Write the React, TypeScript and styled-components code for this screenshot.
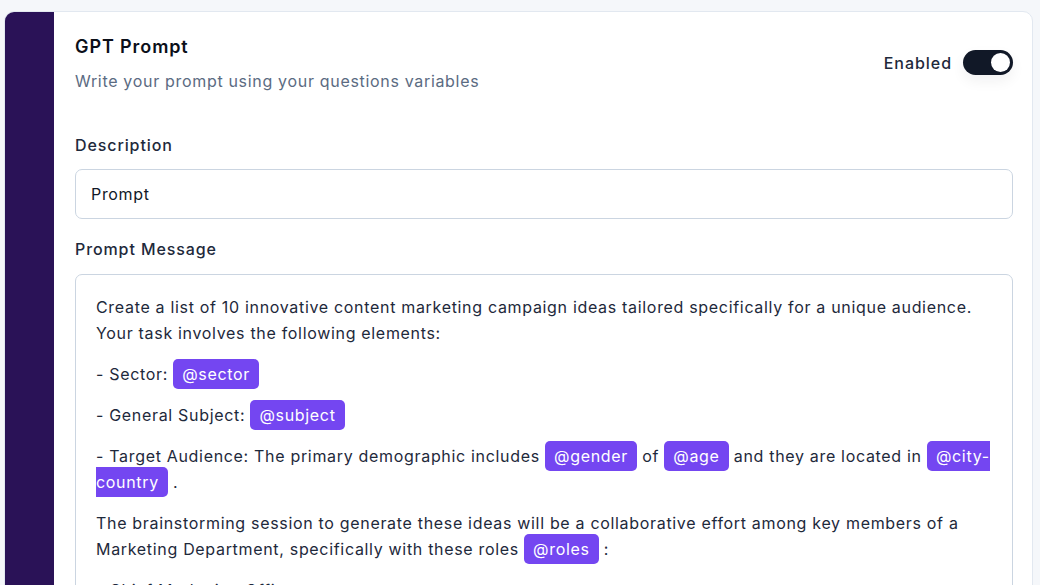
import React from "react";
import styled, { createGlobalStyle } from "styled-components";

const Global = createGlobalStyle`
  html, body { margin: 0; padding: 0; background: #f5f7fa; }
  body { font-family: Inter, "Noto Sans", sans-serif; color: #1e293b; }
  * { box-sizing: border-box; }
`;

const Page = styled.div`
  padding: 11px 7px 0 4px;
  height: 585px;
  overflow: hidden;
`;

const Card = styled.div`
  display: flex;
  background: #fff;
  border: 1px solid #e2e8f0;
  border-radius: 10px;
  overflow: hidden;
  min-height: 700px;
`;

const Sidebar = styled.div`
  width: 49px;
  flex: none;
  background: #2a1257;
`;

const Content = styled.div`
  flex: 1;
  padding: 21px 19px 0 21px;
  display: flex;
  flex-direction: column;
`;

const Header = styled.div`
  display: flex;
  justify-content: space-between;
  align-items: flex-start;
`;

const Title = styled.h2`
  margin: 0;
  font-size: 18px;
  line-height: 28px;
  font-weight: 600;
  letter-spacing: 0.9px;
  color: #0b0f19;
`;

const Subtitle = styled.p`
  margin: 8px 0 0;
  font-size: 16px;
  line-height: 24px;
  letter-spacing: 0.68px;
  color: #5b6b82;
`;

const ToggleWrap = styled.label`
  display: flex;
  align-items: center;
  gap: 11px;
  margin-top: 17px;
  font-size: 16px;
  line-height: 24px;
  font-weight: 500;
  letter-spacing: 0.95px;
  color: #1e293b;
`;

const Track = styled.span<{ $on: boolean }>`
  width: 50px;
  height: 25px;
  border-radius: 13px;
  background: ${(p) => (p.$on ? "#111827" : "#cbd5e1")};
  display: flex;
  align-items: center;
  justify-content: ${(p) => (p.$on ? "flex-end" : "flex-start")};
  padding: 0 3px;
  box-shadow: 0 6px 14px rgba(15, 23, 42, 0.06);
`;

const Knob = styled.span`
  width: 19px;
  height: 19px;
  border-radius: 50%;
  background: #fff;
`;

const Label = styled.div<{ $top: number }>`
  margin-top: ${(p) => p.$top}px;
  font-size: 16px;
  line-height: 24px;
  font-weight: 500;
  letter-spacing: 0.9px;
  color: #1e293b;
`;

const Input = styled.div`
  margin-top: 12px;
  height: 50px;
  border: 1px solid #cbd5e1;
  border-radius: 7px;
  display: flex;
  align-items: center;
  padding: 0 15px;
  font-size: 16px;
  letter-spacing: 0.68px;
  color: #111827;
`;

const Editor = styled.div`
  margin-top: 13px;
  border: 1px solid #cbd5e1;
  border-radius: 7px;
  padding: 19px 20px 20px 20px;
  font-size: 16px;
  line-height: 26px;
  letter-spacing: 0.68px;
  color: #1e293b;
`;

const Para = styled.p`
  margin: 0 0 15px;
`;

const Tag = styled.span`
  background: #7446f1;
  color: #fff;
  border-radius: 5px;
  padding: 5px 9px;
`;

export default function App() {
  return (
    <>
      <Global />
      <Page>
        <Card>
          <Sidebar />
          <Content>
            <Header>
              <div>
                <Title>GPT Prompt</Title>
                <Subtitle>Write your prompt using your questions variables</Subtitle>
              </div>
              <ToggleWrap>
                Enabled
                <Track $on>
                  <Knob />
                </Track>
              </ToggleWrap>
            </Header>
            <Label $top={40}>Description</Label>
            <Input>Prompt</Input>
            <Label $top={18}>Prompt Message</Label>
            <Editor>
              <Para>
                Create a list of 10 innovative content marketing campaign ideas tailored specifically for a unique audience.
                Your task involves the following elements:
              </Para>
              <Para>
                - Sector: <Tag>@sector</Tag>
              </Para>
              <Para>
                - General Subject: <Tag>@subject</Tag>
              </Para>
              <Para>
                - Target Audience: The primary demographic includes <Tag>@gender</Tag> of <Tag>@age</Tag> and they are located
                in <Tag>@city-country</Tag> .
              </Para>
              <Para>
                The brainstorming session to generate these ideas will be a collaborative effort among key members of a
                Marketing Department, specifically with these roles <Tag>@roles</Tag> :
              </Para>
              <Para>- Chief Marketing Officer</Para>
            </Editor>
          </Content>
        </Card>
      </Page>
    </>
  );
}
